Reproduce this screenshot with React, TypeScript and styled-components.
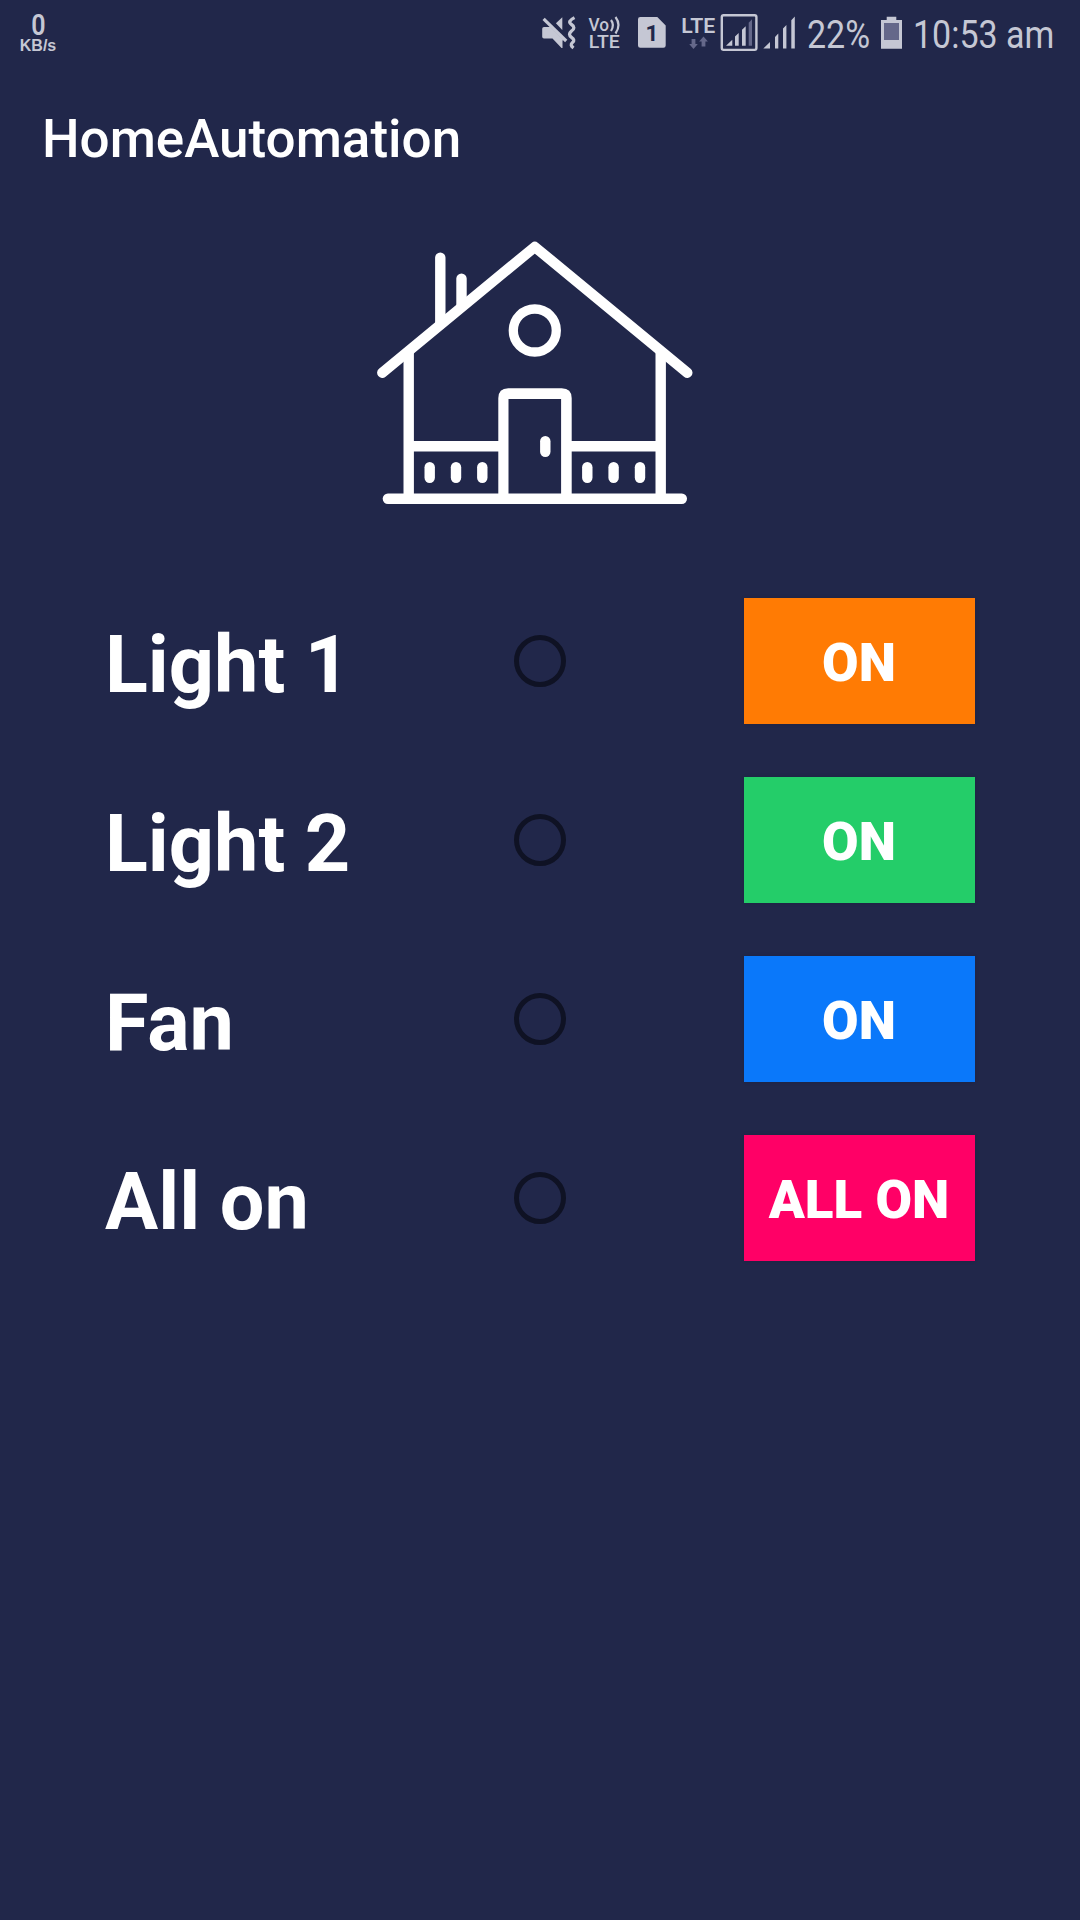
import React from "react";
import styled, { createGlobalStyle } from "styled-components";

const INK = "#c5c7d4";
const DIM = "#65688a";
const NAVY = "#21274a";

const GlobalStyle = createGlobalStyle`
  *, *::before, *::after { box-sizing: border-box; }
  body {
    margin: 0;
    background: ${NAVY};
    font-family: Roboto, "Liberation Sans", sans-serif;
  }
`;

const Screen = styled.main`
  display: flex;
  flex-direction: column;
  width: 1080px;
  height: 1920px;
  overflow: hidden;
  background: ${NAVY};
  color: #fff;
`;

const StatusBar = styled.header`
  display: flex;
  justify-content: space-between;
  height: 63px;
  color: ${INK};
`;

const Speed = styled.div`
  display: flex;
  flex-direction: column;
  align-items: center;
  width: 38px;
  margin-left: 19px;
  padding-top: 11px;
`;

const SpeedValue = styled.span`
  font-size: 29.5px;
  font-weight: 600;
  line-height: 28px;
  transform: scaleX(0.85);
`;

const SpeedUnit = styled.span`
  font-family: "Liberation Sans", Arial, sans-serif;
  font-size: 16px;
  font-weight: 700;
  line-height: 13px;
`;

const StatusIcons = styled.div`
  display: flex;
  width: 540px;
`;

const Glyph = styled.svg`
  flex: none;
  display: block;
  height: 63px;
  font-family: Roboto, "Liberation Sans", sans-serif;
`;

const Condensed = styled.div<{ $width: number }>`
  flex: none;
  width: ${(p) => p.$width}px;
  font-size: 39.5px;
  line-height: 46px;
  padding-top: 12px;
  white-space: nowrap;

  span {
    display: inline-block;
    transform: scaleX(0.86);
    transform-origin: left;
  }
`;

const AppBar = styled.div`
  display: flex;
  align-items: center;
  height: 147px;
  padding: 4px 42px 0;
`;

const Title = styled.h1`
  margin: 0;
  font-size: 53px;
  font-weight: 500;
  line-height: 62px;
`;

const Hero = styled.div`
  display: flex;
  height: 388px;
  padding: 30px 0 0 374px;
`;

const DeviceList = styled.section`
  display: flex;
  flex-direction: column;
  gap: 53px;
  padding: 0 105px;
`;

const DeviceRow = styled.div`
  display: grid;
  grid-template-columns: 409px 230px 231px;
  align-items: center;
  height: 126px;
`;

const DeviceName = styled.span`
  padding-top: 7px;
  font-size: 79.2px;
  font-weight: 700;
  line-height: 92px;
`;

const Radio = styled.span`
  width: 52px;
  height: 52px;
  border: 5px solid #0f1224;
  border-radius: 50%;
`;

const PowerButton = styled.button<{ $color: string }>`
  width: 231px;
  height: 126px;
  padding: 4px 1px 0 0;
  border: 0;
  background: ${(p) => p.$color};
  box-shadow: 0 0 4px rgba(0, 0, 0, 0.12);
  color: #fff;
  font-family: inherit;
  font-size: 53px;
  font-weight: 900;
  white-space: nowrap;
`;

const MutedIcon = () => (
  <Glyph width="46" viewBox="540 0 46 63" fill={INK}>
    <path d="M544 27h6.5l13 13-1 .5V48h-1L552.5 38.6H544q-1.800 0-1.800-1.800v-8q0-1.800 1.800-1.800z" />
    <path d="M562.3 17.3v12.600l-6.400-6.600z" />
    <path d="M543.600 18.800 566.200 41" stroke={INK} strokeWidth="3.200" />
    <path
      d="M574.500 17.600Q566.800 21.500 571.500 24.500T571.500 31Q567.500 34.500 571.500 37.300T572.500 42.500Q569.500 45 573.500 48"
      fill="none"
      stroke={INK}
      strokeWidth="3.300"
    />
  </Glyph>
);

const VolteIcon = () => (
  <Glyph width="48" viewBox="586 0 48 63" fill={INK}>
    <text x="588.500" y="30.800" fontSize="18.500" fontWeight="500" textLength="20.500" lengthAdjust="spacingAndGlyphs">Vo</text>
    <path d="M611 20q3.800 5 0 11M615.500 17q6 8 0 16.500" fill="none" stroke={INK} strokeWidth="2.200" />
    <text x="588.800" y="48" fontSize="18.500" fontWeight="500" textLength="31" lengthAdjust="spacingAndGlyphs">LTE</text>
  </Glyph>
);

const SimIcon = () => (
  <Glyph width="44" viewBox="634 0 44 63">
    <path d="M640.300 17h17l8.400 8.500v20q0 2.300-2.300 2.300h-23.100q-2.300 0-2.300-2.300V19.300q0-2.300 2.300-2.300z" fill={INK} />
    <text x="645.600" y="41" fontSize="22.500" fontWeight="700" fill={NAVY}>1</text>
  </Glyph>
);

const LteIcon = () => (
  <Glyph width="42" viewBox="678 0 42 63">
    <text x="681.200" y="32.700" fontSize="20.200" fontWeight="600" fill={INK} textLength="34" lengthAdjust="spacingAndGlyphs">LTE</text>
    <path d="M691.600 39h3.800v5h2.400l-4.300 5-4.300-5h2.400z" fill={DIM} />
    <path d="M703.500 36.600l4.400 5h-2.500v5h-3.800v-5h-2.500z" fill={DIM} />
  </Glyph>
);

const BoxedSignalIcon = () => (
  <Glyph width="40" viewBox="720 0 40 63" fill={INK}>
    <rect x="721.800" y="15.300" width="34.600" height="34.600" rx="1.800" fill="none" stroke={INK} strokeWidth="2.400" />
    <path d="M726 45.700l6.300-6v6zM735 45.700V36.500l3.700-3.500v12.700zM742 45.700V29.700l3.700-3.500v19.500z" />
    <path d="M748.700 45.700V22.800l3.300-3.500v26.400z" fill={DIM} />
  </Glyph>
);

const SignalIcon = () => (
  <Glyph width="47" viewBox="760 0 47 63" fill={INK}>
    <path d="M763.300 48.400l6.700-6.400v6.400zM775 48.400V37l3.300-3.500v14.900zM783 48.400V28.500l3.400-3.500v23.400zM791.300 48.400V20.300l3.500-3.700v31.800z" />
  </Glyph>
);

const BatteryIcon = () => (
  <Glyph width="35" viewBox="878 0 35 63">
    <path d="M886.700 16.700h9.600v3.300h5.700v28.700h-21V20h5.700z" fill={INK} />
    <path d="M884 23h15v17h-15z" fill={DIM} />
  </Glyph>
);

const HouseIcon = () => (
  <svg
    width="322"
    height="270"
    viewBox="374 240 322 270"
    fill="none"
    stroke="#fff"
    strokeWidth="10.4"
    strokeLinecap="round"
    strokeLinejoin="round"
  >
    <path d="M382.300 372.700 534.800 246.900 687.300 372.700" />
    <path d="M440.300 257.600V324M461.500 278.600V306" />
    <path d="M408.700 352V498M660.700 352V498" />
    <path d="M387.900 498.700H681.800" />
    <path d="M408.700 446.200H503M567 446.200H660.700" strokeLinecap="butt" />
    <path
      d="M498.300 498V398.300q0-10 10-10h53.400q10 0 10 10V498h-10.600V399H508.500v99z"
      fill="#fff"
      stroke="none"
    />
    <path d="M545.300 441.200v10.600" />
    {[429.7, 456, 482.3, 587.3, 613.6, 640].map((x) => (
      <path key={x} d={`M${x} 467.200v10.600`} />
    ))}
    <circle cx="534.800" cy="330.500" r="21.500" strokeWidth="9.300" />
  </svg>
);

const devices = [
  { name: "Light 1", action: "ON", color: "#ff7b04" },
  { name: "Light 2", action: "ON", color: "#24cd69" },
  { name: "Fan", action: "ON", color: "#0a78fa" },
  { name: "All on", action: "ALL ON", color: "#ff0066" },
];

export default function App() {
  return (
    <>
      <GlobalStyle />
      <Screen>
        <StatusBar>
          <Speed>
            <SpeedValue>0</SpeedValue>
            <SpeedUnit>KB/s</SpeedUnit>
          </Speed>
          <StatusIcons>
            <MutedIcon />
            <VolteIcon />
            <SimIcon />
            <LteIcon />
            <BoxedSignalIcon />
            <SignalIcon />
            <Condensed $width={71}><span>22%</span></Condensed>
            <BatteryIcon />
            <Condensed $width={160}><span>10:53 am</span></Condensed>
          </StatusIcons>
        </StatusBar>
        <AppBar>
          <Title>HomeAutomation</Title>
        </AppBar>
        <Hero>
          <HouseIcon />
        </Hero>
        <DeviceList>
          {devices.map((d) => (
            <DeviceRow key={d.name}>
              <DeviceName>{d.name}</DeviceName>
              <Radio />
              <PowerButton $color={d.color}>{d.action}</PowerButton>
            </DeviceRow>
          ))}
        </DeviceList>
      </Screen>
    </>
  );
}
